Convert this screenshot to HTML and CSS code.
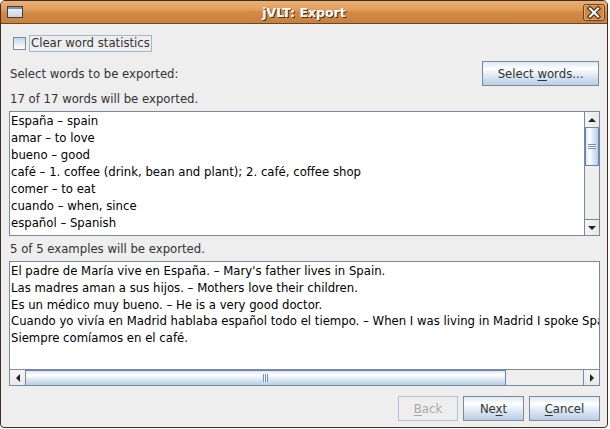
FILE: index.html
```html
<!DOCTYPE html>
<html>
<head>
<meta charset="utf-8">
<link rel="stylesheet" href="styles.css">
</head>
<body>
<div class="window">
  <div class="titlebar">
    <span class="win-icon">
      <svg width="16" height="12" viewBox="0 0 16 12">
        <defs>
          <linearGradient id="wb" x1="0" y1="0" x2="0" y2="1">
            <stop offset="0" stop-color="#f4f6f8"/>
            <stop offset="1" stop-color="#c9d2dc"/>
          </linearGradient>
        </defs>
        <rect x="0.5" y="0.5" width="15" height="11" fill="url(#wb)" stroke="#3a3f48"/>
        <rect x="1" y="1" width="14" height="2" fill="#7f90a8"/>
      </svg>
    </span>
    <span class="title">jVLT: Export</span>
    <span class="close">
      <svg width="22" height="17" viewBox="0 0 22 17">
        <rect x="0.5" y="0.5" width="21" height="16" rx="2" fill="#cf8846" stroke="#6b4220"/>
        <rect x="1.5" y="1.5" width="19" height="14" rx="1" fill="none" stroke="#e6a86c"/>
        <path d="M7 4.5 L15 12.5 M15 4.5 L7 12.5" stroke="#3b2411" stroke-width="4.2" stroke-linecap="square"/>
        <path d="M7 4.5 L15 12.5 M15 4.5 L7 12.5" stroke="#ffffff" stroke-width="2.2" stroke-linecap="square"/>
      </svg>
    </span>
  </div>
  <div class="content">
    <div class="check-row">
      <span class="checkbox"></span>
      <span class="check-label">Clear word statistics</span>
    </div>
    <div class="select-row">
      <span class="text">Select words to be exported:</span>
      <span class="btn btn-select"><span>Select <u>w</u>ords...</span></span>
    </div>
    <div class="label">17 of 17 words will be exported.</div>
    <div class="pane list">
      <div class="list-body">
        <div class="item">España – spain</div>
        <div class="item">amar – to love</div>
        <div class="item">bueno – good</div>
        <div class="item">café – 1. coffee (drink, bean and plant); 2. café, coffee shop</div>
        <div class="item">comer – to eat</div>
        <div class="item">cuando – when, since</div>
        <div class="item">español – Spanish</div>
      </div>
      <div class="vscroll">
        <div class="sb-btn sb-up"><span class="tri tri-up"></span></div>
        <div class="v-track">
          <div class="v-thumb"><span class="v-grip"></span></div>
        </div>
        <div class="sb-btn sb-down"><span class="tri tri-down"></span></div>
      </div>
    </div>
    <div class="label">5 of 5 examples will be exported.</div>
    <div class="pane textarea">
      <div class="ta-body">
        <div class="line">El padre de María vive en España. – Mary's father lives in Spain.</div>
        <div class="line">Las madres aman a sus hijos. – Mothers love their children.</div>
        <div class="line">Es un médico muy bueno. – He is a very good doctor.</div>
        <div class="line">Cuando yo vivía en Madrid hablaba español todo el tiempo. – When I was living in Madrid I spoke Spanish all the time.</div>
        <div class="line">Siempre comíamos en el café.</div>
      </div>
      <div class="hscroll">
        <div class="hb-btn hb-left"><span class="tri tri-left"></span></div>
        <div class="h-track">
          <div class="h-thumb"><span class="h-grip"></span></div>
        </div>
        <div class="hb-btn hb-right"><span class="tri tri-right"></span></div>
      </div>
    </div>
    <div class="buttons">
      <span class="btn btn-back disabled"><span><u>B</u>ack</span></span>
      <span class="btn btn-next"><span>Ne<u>x</u>t</span></span>
      <span class="btn btn-cancel"><span><u>C</u>ancel</span></span>
    </div>
  </div>
</div>
</body>
</html>
```

FILE: styles.css
```css
* { box-sizing: border-box; }
html, body { margin: 0; padding: 0; background: #ffffff; }
body {
  width: 610px;
  height: 429px;
  overflow: hidden;
  font-family: "DejaVu Sans", "Liberation Sans", sans-serif;
  font-size: 11.7px;
  color: #333333;
}
.window {
  width: 608px;
  height: 428px;
  display: flex;
  flex-direction: column;
  border: 1px solid #3b2f25;
  border-radius: 5px 5px 4px 4px;
  overflow: hidden;
  background: #eeeeee;
}
.titlebar {
  flex: none;
  height: 23px;
  display: flex;
  align-items: center;
  background: linear-gradient(#eab077 0%, #e09c5a 40%, #d28a45 52%, #c8803e 100%);
  border-bottom: 1px solid #6b4626;
}
.win-icon { width: 32px; padding-left: 6px; display: flex; }
.title {
  flex: 1;
  text-align: center;
  color: #ffffff;
  font-weight: bold;
  font-size: 12.5px;
  text-shadow: 1px 1px 0 #4a2e14;
  padding-top: 1px;
}
.close { width: 32px; display: flex; justify-content: flex-end; padding-right: 2px; }
.close svg, .win-icon svg { display: block; }

.content {
  flex: 1;
  display: flex;
  flex-direction: column;
  padding: 11px 7px 0 8px;
}
.check-row {
  height: 17px;
  display: flex;
  align-items: center;
}
.checkbox {
  width: 13px;
  height: 13px;
  margin-left: 4px;
  border: 1px solid #7a8a99;
  background: linear-gradient(#c7d8ea, #eef3f8 70%, #ffffff);
}
.check-label {
  margin-left: 3px;
  height: 17px;
  line-height: 15px;
  padding: 0 1px;
  border: 1px solid #a3b8cc;
  color: #333333;
}
.select-row {
  margin-top: 9px;
  height: 25px;
  display: flex;
  align-items: center;
  justify-content: space-between;
  padding: 0 1px;
}
.btn {
  display: flex;
  align-items: center;
  justify-content: center;
  height: 25px;
  border: 1px solid #7a8a99;
  color: #333333;
  white-space: pre;
  background: linear-gradient(#dde8f3 0%, #ffffff 30%, #dde8f3 60%, #b8cfe5 100%);
}
.btn u { text-decoration: underline; text-underline-offset: 2px; }
.btn-select { width: 117px; }
.label {
  margin-top: 6px;
  height: 14px;
  line-height: 14px;
  padding-left: 1px;
}
.pane {
  height: 125px;
  border: 1px solid #7a8a99;
  background: #ffffff;
  overflow: hidden;
}
.list { margin-top: 5px; display: flex; }
.list-body {
  flex: 1;
  padding: 1px 0 0 1px;
  color: #000000;
  overflow: hidden;
}
.item { height: 17px; line-height: 17px; white-space: nowrap; }
.vscroll {
  width: 15px;
  display: flex;
  flex-direction: column;
  border-left: 1px solid #7a8a99;
  background: #eeeeee;
}
.sb-btn {
  height: 16px;
  flex: none;
  display: flex;
  align-items: center;
  justify-content: center;
  background: linear-gradient(90deg, #f6f6f6, #e9e9e9);
}
.sb-up { border-bottom: 1px solid #7a8a99; }
.sb-down { border-top: 1px solid #7a8a99; }
.v-track { flex: 1; }
.v-thumb {
  height: 38px;
  border: 1px solid #6382bf;
  border-top: none;
  display: flex;
  align-items: center;
  justify-content: center;
  background: linear-gradient(90deg, #dde8f3 0%, #ffffff 30%, #dde8f3 60%, #b8cfe5 100%);
}
.v-grip {
  width: 8px;
  height: 5px;
  background: repeating-linear-gradient(#6d8fc9 0 1px, #ffffff 1px 2px);
}
.tri { width: 0; height: 0; }
.tri-up { border-left: 4px solid transparent; border-right: 4px solid transparent; border-bottom: 4px solid #222222; }
.tri-down { border-left: 4px solid transparent; border-right: 4px solid transparent; border-top: 4px solid #222222; }
.tri-left { border-top: 4px solid transparent; border-bottom: 4px solid transparent; border-right: 4px solid #222222; }
.tri-right { border-top: 4px solid transparent; border-bottom: 4px solid transparent; border-left: 4px solid #222222; }

.textarea { margin-top: 5px; display: flex; flex-direction: column; }
.ta-body {
  flex: 1;
  padding: 1px 0 0 1px;
  color: #000000;
  overflow: hidden;
}
.line { height: 16.75px; line-height: 17px; white-space: nowrap; }
.hscroll {
  height: 16px;
  flex: none;
  display: flex;
  border-top: 1px solid #7a8a99;
  background: #eeeeee;
}
.hb-btn {
  width: 16px;
  flex: none;
  display: flex;
  align-items: center;
  justify-content: center;
  background: linear-gradient(#f6f6f6, #e9e9e9);
}
.hb-left { border-right: 1px solid #7a8a99; }
.hb-right { border-left: 1px solid #7a8a99; }
.h-track { flex: 1; display: flex; }
.h-thumb {
  width: 480px;
  border-right: 1px solid #6382bf;
  border-top: 1px solid #6382bf;
  display: flex;
  align-items: center;
  justify-content: center;
  background: linear-gradient(#dde8f3 0%, #ffffff 30%, #dde8f3 60%, #b8cfe5 100%);
}
.h-grip {
  width: 5px;
  height: 8px;
  background: repeating-linear-gradient(90deg, #6d8fc9 0 1px, #ffffff 1px 2px);
}
.buttons {
  margin-top: 10px;
  height: 25px;
  display: flex;
  justify-content: flex-end;
  gap: 5px;
}
.btn-back { width: 60px; }
.btn-next { width: 61px; }
.btn-cancel { width: 71px; }
.btn.disabled {
  background: #eeeeee;
  border-color: #b8c2cc;
  color: #a8a8a8;
}
```
